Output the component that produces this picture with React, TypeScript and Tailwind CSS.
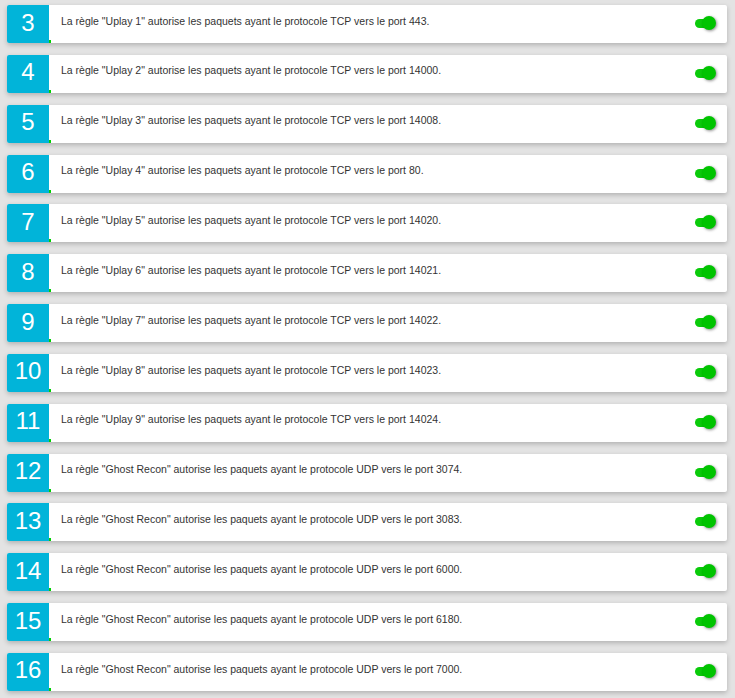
import React from "react";

const rows: { n: number; name: string; proto: string; port: string }[] = [
  { n: 3, name: "Uplay 1", proto: "TCP", port: "443" },
  { n: 4, name: "Uplay 2", proto: "TCP", port: "14000" },
  { n: 5, name: "Uplay 3", proto: "TCP", port: "14008" },
  { n: 6, name: "Uplay 4", proto: "TCP", port: "80" },
  { n: 7, name: "Uplay 5", proto: "TCP", port: "14020" },
  { n: 8, name: "Uplay 6", proto: "TCP", port: "14021" },
  { n: 9, name: "Uplay 7", proto: "TCP", port: "14022" },
  { n: 10, name: "Uplay 8", proto: "TCP", port: "14023" },
  { n: 11, name: "Uplay 9", proto: "TCP", port: "14024" },
  { n: 12, name: "Ghost Recon", proto: "UDP", port: "3074" },
  { n: 13, name: "Ghost Recon", proto: "UDP", port: "3083" },
  { n: 14, name: "Ghost Recon", proto: "UDP", port: "6000" },
  { n: 15, name: "Ghost Recon", proto: "UDP", port: "6180" },
  { n: 16, name: "Ghost Recon", proto: "UDP", port: "7000" },
];

function Toggle() {
  return (
    <div className="relative w-[22px] h-[14px]">
      <div className="absolute left-0 top-[3px] w-[16px] h-[9px] rounded-full bg-[#0acb0a]" />
      <div className="absolute left-[7px] top-0 w-[14px] h-[14px] rounded-full bg-[#00c400] shadow-[1px_1px_3px_rgba(0,0,0,0.45)]" />
    </div>
  );
}

export default function App() {
  return (
    <div
      className="w-[735px] h-[698px] bg-[#e3e3e3] pt-[5px] pl-[7px] pr-[8px] flex flex-col gap-[11.85px] overflow-hidden"
      style={{ fontFamily: '"Liberation Sans", Arial, sans-serif' }}
    >
      {rows.map((r) => (
        <div
          key={r.n}
          className="relative flex items-center h-[38px] bg-white rounded-[2px] shadow-[0_2px_5px_rgba(0,0,0,0.22)]"
        >
          <div className="relative w-[42px] h-full bg-[#01b4d9] rounded-l-[2px] flex items-center justify-center text-white text-[24px] leading-none pb-[3px]">
            {r.n}
            <div className="absolute right-[-2px] bottom-0 w-[2px] h-[3px] bg-[#00d000]" />
          </div>
          <div className="flex-1 pl-[12px] pb-[5px] text-[10.5px] text-[#333]">
            La règle "{r.name}" autorise les paquets ayant le protocole {r.proto} vers le port {r.port}.
          </div>
          <div className="pr-[10px] pb-[2px]">
            <Toggle />
          </div>
        </div>
      ))}
    </div>
  );
}
